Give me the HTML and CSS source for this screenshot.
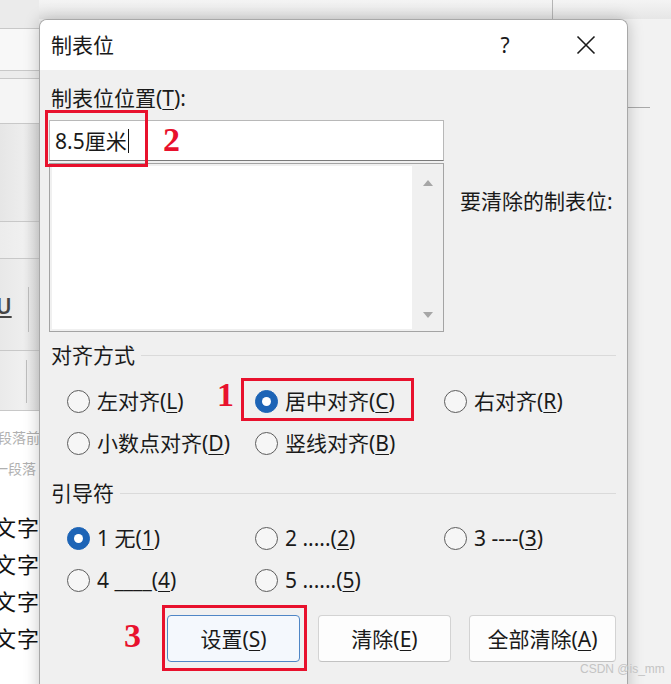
FILE: index.html
```html
<!DOCTYPE html>
<html lang="zh-CN">
<head>
<meta charset="utf-8">
<title>制表位</title>
<link rel="stylesheet" href="styles.css">
</head>
<body>
<div class="backdrop">
  <div class="strip">
    <div class="seg s1"></div>
    <div class="seg s2"></div>
    <div class="seg s3"></div>
    <div class="seg s4"></div>
    <div class="seg s5"></div>
    <div class="seg s6"></div>
    <div class="seg s7"><span class="u-btn">U</span><span class="vsep vsep1"></span></div>
    <div class="seg s8"><span class="vsep vsep2"></span></div>
    <div class="doc">
      <div class="faint">段落前</div>
      <div class="faint f2">一段落</div>
      <div class="doctext">
        <div>文字</div>
        <div>文字</div>
        <div>文字</div>
        <div>文字</div>
      </div>
    </div>
  </div>
  <div class="main">
    <div class="topbar"><div class="tb-left"></div><div class="tb-right"></div></div>
    <div class="main-body"><div class="rline"></div></div>
  </div>
</div>

<div class="dialog">
  <div class="titlebar">
    <div class="title">制表位</div>
    <div class="help">?</div>
    <div class="close">
      <svg width="20" height="20" viewBox="0 0 20 20"><path d="M1.5 1.5 L18.5 18.5 M18.5 1.5 L1.5 18.5" stroke="#1a1a1a" stroke-width="1.6" fill="none"/></svg>
    </div>
  </div>
  <div class="content">
    <div class="lbl">制表位位置(<u>T</u>):</div>
    <div class="top">
      <div class="fieldcol">
        <div class="input"><span>8.5厘米</span><span class="caret"></span></div>
        <div class="list">
          <div class="list-area"></div>
          <div class="scroll">
            <svg width="10" height="6" viewBox="0 0 10 6"><path d="M5 0 L10 6 L0 6 Z" fill="#a6a6a6"/></svg>
            <svg width="10" height="6" viewBox="0 0 10 6"><path d="M0 0 L10 0 L5 6 Z" fill="#a6a6a6"/></svg>
          </div>
        </div>
      </div>
      <div class="side">要清除的制表位:</div>
    </div>

    <div class="group-h g1">对齐方式</div>
    <div class="radios r1">
      <div class="opt"><span class="radio"></span><span class="txt">左对齐(<u>L</u>)</span></div>
      <div class="opt"><span class="radio on"></span><span class="txt">居中对齐(<u>C</u>)</span></div>
      <div class="opt"><span class="radio"></span><span class="txt">右对齐(<u>R</u>)</span></div>
      <div class="opt"><span class="radio"></span><span class="txt">小数点对齐(<u>D</u>)</span></div>
      <div class="opt"><span class="radio"></span><span class="txt">竖线对齐(<u>B</u>)</span></div>
    </div>

    <div class="group-h g2">引导符</div>
    <div class="radios r2">
      <div class="opt"><span class="radio on"></span><span class="txt">1 无(<u>1</u>)</span></div>
      <div class="opt"><span class="radio"></span><span class="txt">2 .....(<u>2</u>)</span></div>
      <div class="opt"><span class="radio"></span><span class="txt">3 ----(<u>3</u>)</span></div>
      <div class="opt"><span class="radio"></span><span class="txt">4 ____(<u>4</u>)</span></div>
      <div class="opt"><span class="radio"></span><span class="txt">5 ......(<u>5</u>)</span></div>
    </div>

    <div class="btns">
      <div class="btn primary"><span>设置(<u>S</u>)</span></div>
      <div class="btn"><span>清除(<u>E</u>)</span></div>
      <div class="btn wide"><span>全部清除(<u>A</u>)</span></div>
    </div>
  </div>

  <div class="mark box-input"></div>
  <div class="num n2">2</div>
  <div class="mark box-center"></div>
  <div class="num n1">1</div>
  <div class="mark box-set"></div>
  <div class="num n3">3</div>
</div>

<div class="watermark">CSDN @is_mm</div>
</body>
</html>
```
FILE: styles.css
```css
* { box-sizing: border-box; }
html, body { margin: 0; padding: 0; }
body {
  width: 671px;
  height: 684px;
  overflow: hidden;
  position: relative;
  font-family: "Noto Sans", "Noto Sans CJK SC", sans-serif;
  color: #1a1a1a;
  background: #f2f2f2;
}

/* ---------- backdrop (Word window) ---------- */
.backdrop { display: flex; height: 684px; }
.strip {
  width: 39px;
  flex: none;
  display: flex;
  flex-direction: column;
  overflow: hidden;
}
.seg { flex: none; border-bottom: 1px solid #c8c8c8; }
.s1 { height: 29px; background: #ebebeb; }
.s2 { height: 42px; background: #f8f8f8; }
.s3 { height: 8px; background: #ececec; }
.s4 { height: 45px; background: #f5f5f5; }
.s5 { height: 98px; background: linear-gradient(90deg, #e6e6e6, #ededed 60%, #dcdcdc); }
.s6 { height: 37px; background: linear-gradient(90deg, #ececec, #f0f0f0 60%, #e0e0e0); }
.s7 {
  height: 92px;
  background: linear-gradient(90deg, #e8e8e8, #eeeeee 60%, #dedede);
  display: flex;
  align-items: flex-start;
  padding-top: 28px;
}
.s8 {
  height: 60px;
  background: linear-gradient(90deg, #eaeaea, #f0f0f0 60%, #e0e0e0);
  padding-top: 9px;
  padding-left: 26px;
}
.u-btn {
  width: 32px;
  margin-left: -4px;
  margin-top: 5px;
  font-size: 21px;
  line-height: 28px;
  font-weight: 600;
  color: #444;
  text-decoration: underline;
  text-underline-offset: 2px;
}
.vsep { display: block; width: 1px; background: #bdbdbd; }
.vsep1 { height: 45px; }
.vsep2 { height: 43px; }

.doc {
  flex: 1;
  background: #fff;
  padding-top: 11px;
  white-space: nowrap;
}
.faint {
  font-size: 14px;
  line-height: 31px;
  color: #b0b0b0;
  font-family: "Noto Sans CJK SC", sans-serif;
  margin-left: -2px;
}
.faint.f2 { margin-left: -6px; }
.doctext {
  margin-top: 24px;
  margin-left: -6px;
  font-family: "Noto Sans CJK SC", sans-serif;
  font-size: 22px;
  line-height: 37px;
  letter-spacing: 1px;
  color: #111;
}

.main { flex: 1; display: flex; flex-direction: column; background: #f2f2f2; }
.topbar { height: 19px; display: flex; background: linear-gradient(#f4f4f4, #e6e6e6); }
.tb-left { width: 514px; border-right: 1px solid #b5b5b5; }
.rline { margin: 88px 0 0 589px; width: 22px; border-top: 1px solid #a9a9a9; }

/* ---------- dialog ---------- */
.dialog {
  position: absolute;
  left: 39px;
  top: 19px;
  width: 589px;
  height: 680px;
  border: 1px solid #a8a8a8;
  border-bottom: none;
  border-radius: 8px 8px 0 0;
  background: #f0f0f0;
  box-shadow: 0 0 16px rgba(0, 0, 0, 0.22);
}
.titlebar {
  height: 50px;
  background: #fff;
  border-radius: 7px 7px 0 0;
  display: flex;
  align-items: center;
  padding-left: 11px;
  padding-right: 16px;
  font-size: 21px;
}
.title { flex: 1; line-height: 28px; }
.help { width: 40px; margin-right: 36px; text-align: center; line-height: 28px; }
.close { width: 50px; display: flex; justify-content: center; align-items: center; }

.content { padding: 14px 11px 0 9px; font-size: 21px; }
.lbl { line-height: 28px; padding-left: 2px; }
u { text-underline-offset: 3px; text-decoration-thickness: 1px; }

.top { display: flex; margin-top: 8px; }
.fieldcol { width: 395px; flex: none; }
.input {
  height: 41px;
  background: #fff;
  border: 1px solid #b8b8b8;
  border-bottom-color: #7a7a7a;
  padding-left: 5px;
  display: flex;
  align-items: center;
  line-height: 28px;
}
.caret { display: inline-block; width: 1px; height: 24px; background: #111; margin-left: 1px; }
.list {
  margin-top: 2px;
  height: 169px;
  border: 1px solid #a4a4a4;
  background: #f0f0f0;
  display: flex;
  padding: 2px 0 2px 2px;
}
.list-area { flex: 1; background: #fff; }
.scroll {
  width: 31px;
  display: flex;
  flex-direction: column;
  align-items: center;
  justify-content: space-between;
  padding: 14px 0 11px;
}
.side { padding-left: 16px; padding-top: 67px; line-height: 28px; white-space: nowrap; }

.group-h {
  display: flex;
  align-items: center;
  line-height: 28px;
  padding-left: 2px;
}
.group-h::after {
  content: "";
  flex: 1;
  border-top: 1px solid #dadada;
  margin-left: 6px;
}
.g1 { margin-top: 9px; }
.g2 { margin-top: 15px; }

.radios {
  display: grid;
  grid-template-columns: 188px 189px 1fr;
  grid-auto-rows: 42px;
  padding-left: 18px;
}
.r1 { margin-top: 11px; }
.r2 { margin-top: 10px; }
.opt { display: flex; align-items: center; gap: 7px; white-space: nowrap; line-height: 28px; }
.txt { white-space: pre; }
.radio {
  width: 23px;
  height: 23px;
  flex: none;
  border-radius: 50%;
  border: 1.5px solid #5c5c5c;
  background: #f6f6f6;
  position: relative;
}
.radio.on { background: #1d64b6; border-color: #1d64b6; }
.radio.on::after {
  content: "";
  position: absolute;
  left: 50%;
  top: 50%;
  width: 9px;
  height: 9px;
  margin: -4.5px 0 0 -4.5px;
  border-radius: 50%;
  background: #fff;
}

.btns { display: flex; justify-content: flex-end; gap: 18px; margin-top: 14px; }
.btn {
  width: 133px;
  height: 47px;
  display: flex;
  align-items: center;
  justify-content: center;
  background: #fdfdfd;
  border: 1px solid #d3d3d3;
  border-bottom-color: #c2c2c2;
  border-radius: 4px;
  line-height: 28px;
  white-space: nowrap;
}
.btn.wide { width: 147px; }
.btn.primary { background: #f4f8fd; border: 1.5px solid #4f86c6; }

/* ---------- annotations ---------- */
.mark { position: absolute; border: 3px solid #e8112d; }
.box-input { left: 5px; top: 90px; width: 103px; height: 57px; }
.box-center { left: 201px; top: 358px; width: 173px; height: 43px; }
.box-set { left: 122px; top: 585px; width: 145px; height: 66px; }
.num {
  position: absolute;
  font-family: "Liberation Serif", serif;
  font-weight: bold;
  font-size: 34px;
  line-height: 34px;
  color: #e8112d;
}
.n2 { left: 123px; top: 103px; }
.n1 { left: 177px; top: 358px; }
.n3 { left: 84px; top: 599px; }

.watermark {
  position: absolute;
  left: 580px;
  top: 661px;
  font-family: "Liberation Sans", sans-serif;
  font-size: 12px;
  line-height: 16px;
  color: #c4c4c4;
  white-space: nowrap;
}
```
